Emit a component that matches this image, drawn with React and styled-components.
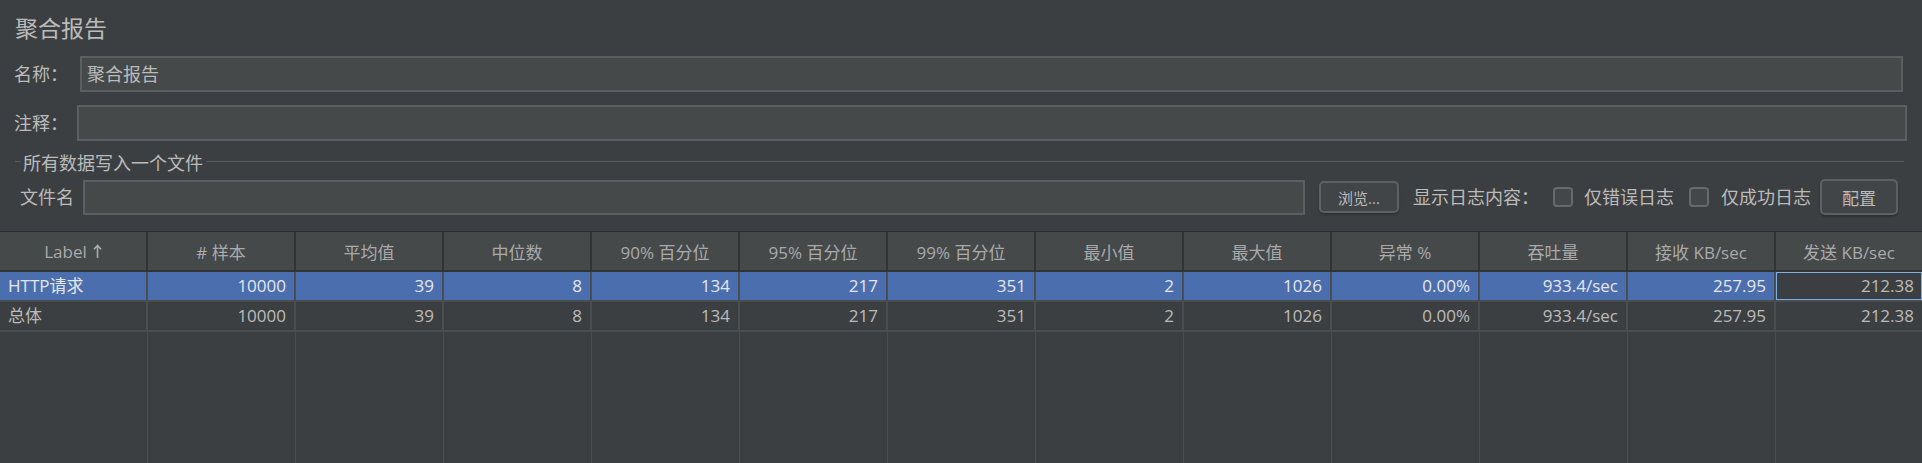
import styled, { createGlobalStyle } from 'styled-components'

const GlobalStyle = createGlobalStyle`
  html, body {
    margin: 0;
    padding: 0;
    background: #3c3f41;
  }
  body {
    font-family: "Open Sans", "Noto Sans CJK SC", sans-serif;
    color: #bbbbbb;
  }
`

const Page = styled.div`
  height: 100vh;
  display: flex;
  flex-direction: column;
  overflow: hidden;
  background: #3c3f41;
`

const Title = styled.div`
  font-size: 23px;
  line-height: 30px;
  padding: 13px 0 0 15px;
`

const FieldRow = styled.div`
  display: flex;
  align-items: center;
  margin-top: 13px;
  padding: 0 ${props => props.$right}px 0 14px;
`

const Label = styled.span`
  font-size: 18px;
  line-height: 24px;
  white-space: nowrap;
  margin-left: ${props => props.$gap || 0}px;
`

const TextField = styled.div`
  flex: 1;
  box-sizing: border-box;
  height: ${props => props.$h || 36}px;
  margin-left: ${props => props.$gap}px;
  padding-left: 5px;
  background: #45494a;
  border: 2px solid #5c5f61;
  font-size: 18px;
  line-height: ${props => (props.$h || 36) - 4}px;
  color: #bbbbbb;
`

const Legend = styled.div`
  display: flex;
  margin-top: 10px;
  padding: 0 18px 0 15px;
  height: 24px;
  font-size: 18px;
  line-height: 24px;
`

const Rule = styled.div`
  height: 1px;
  margin-top: 10px;
  background: #585b5d;
  width: ${props => props.$w ? props.$w + 'px' : 'auto'};
  flex: ${props => props.$w ? 'none' : 1};
`

const LegendText = styled.span`
  margin: 0 3px 0 2px;
`

const FileRow = styled.div`
  display: flex;
  align-items: center;
  height: 36px;
  margin-top: 4px;
  padding: 0 24px 0 20px;
`

const Button = styled.div`
  box-sizing: border-box;
  width: ${props => props.$w}px;
  height: ${props => props.$h}px;
  margin-left: ${props => props.$gap}px;
  display: flex;
  align-items: center;
  justify-content: center;
  border: 2px solid #5e6163;
  border-radius: 5px;
  background: #424547;
  box-shadow: 0 2px 2px rgba(0, 0, 0, 0.22);
  font-size: ${props => props.$fs}px;
  color: #bbbbbb;
`

const Check = styled.div`
  box-sizing: border-box;
  width: 20px;
  height: 20px;
  margin-left: ${props => props.$gap}px;
  border: 2px solid #666a6c;
  border-radius: 4px;
  background: #43474a;
`

const Table = styled.div`
  flex: 1;
  display: flex;
  flex-direction: column;
  margin-top: 16px;
  border-top: 1px solid #2e3032;
`

const HeaderGrid = styled.div`
  display: grid;
  grid-template-columns: repeat(13, 1fr);
  column-gap: 2px;
  background: #313335;
  border-bottom: 2px solid #313335;
`

const HeaderCell = styled.div`
  height: 38px;
  display: flex;
  align-items: center;
  justify-content: center;
  background: #45494a;
  font-size: 17px;
  color: #aaaaaa;
  white-space: nowrap;
`

const BodyGrid = styled.div`
  flex: 1;
  display: grid;
  grid-template-columns: repeat(13, 1fr);
  grid-template-rows: 28px 28px 1fr;
  gap: 2px;
  background: #4b4e50;
`

const Cell = styled.div`
  box-sizing: border-box;
  padding: 0 8px;
  font-size: 17px;
  line-height: 28px;
  white-space: nowrap;
  overflow: hidden;
  text-align: ${props => props.$left ? 'left' : 'right'};
  background: ${props => props.$selected ? '#4b6eaf' : '#3c3f41'};
  color: ${props => props.$selected ? '#e6e6e6' : '#bbbbbb'};
  box-shadow: ${props => props.$focus ? 'inset 0 0 0 1px #7bb0e6' : 'none'};
`

const FillCell = styled.div`
  margin-right: -1px;
  background: #3c3f41;
`

const SortArrow = () => (
  <svg width="9" height="15" viewBox="0 0 9 15" style={{ marginLeft: 6 }}>
    <path d="M4.5 1.5V14M1 5.2L4.5 1.5L8 5.2" fill="none" stroke="#aaaaaa" strokeWidth="1.6" />
  </svg>
)

const columns = ['Label', '# 样本', '平均值', '中位数', '90% 百分位', '95% 百分位', '99% 百分位',
  '最小值', '最大值', '异常 %', '吞吐量', '接收 KB/sec', '发送 KB/sec']

const values = ['10000', '39', '8', '134', '217', '351', '2', '1026', '0.00%', '933.4/sec', '257.95', '212.38']

const rows = [
  { label: 'HTTP请求', values, selected: true },
  { label: '总体', values, selected: false },
]

export default function App() {
  return (
    <Page>
      <GlobalStyle />
      <Title>聚合报告</Title>
      <FieldRow $right={19}>
        <Label>名称：</Label>
        <TextField $gap={12}>聚合报告</TextField>
      </FieldRow>
      <FieldRow $right={15}>
        <Label>注释：</Label>
        <TextField $gap={9} />
      </FieldRow>
      <Legend>
        <Rule $w={6} />
        <LegendText>所有数据写入一个文件</LegendText>
        <Rule />
      </Legend>
      <FileRow>
        <Label>文件名</Label>
        <TextField $gap={9} $h={35} />
        <Button $gap={14} $w={80} $h={32} $fs={15}>浏览...</Button>
        <Label $gap={14}>显示日志内容：</Label>
        <Check $gap={14} />
        <Label $gap={11}>仅错误日志</Label>
        <Check $gap={15} />
        <Label $gap={12}>仅成功日志</Label>
        <Button $gap={9} $w={78} $h={36} $fs={17}>配置</Button>
      </FileRow>
      <Table>
        <HeaderGrid>
          {columns.map((c, i) => (
            <HeaderCell key={c}>
              {c}
              {i === 0 && <SortArrow />}
            </HeaderCell>
          ))}
        </HeaderGrid>
        <BodyGrid>
          {rows.map((r) => [
            <Cell key={r.label} $left $selected={r.selected}>{r.label}</Cell>,
            ...r.values.map((v, i) => (
              <Cell
                key={r.label + i}
                $selected={r.selected && i < r.values.length - 1}
                $focus={r.selected && i === r.values.length - 1}
              >
                {v}
              </Cell>
            )),
          ])}
          {columns.map((c) => <FillCell key={'f' + c} />)}
        </BodyGrid>
      </Table>
    </Page>
  )
}
